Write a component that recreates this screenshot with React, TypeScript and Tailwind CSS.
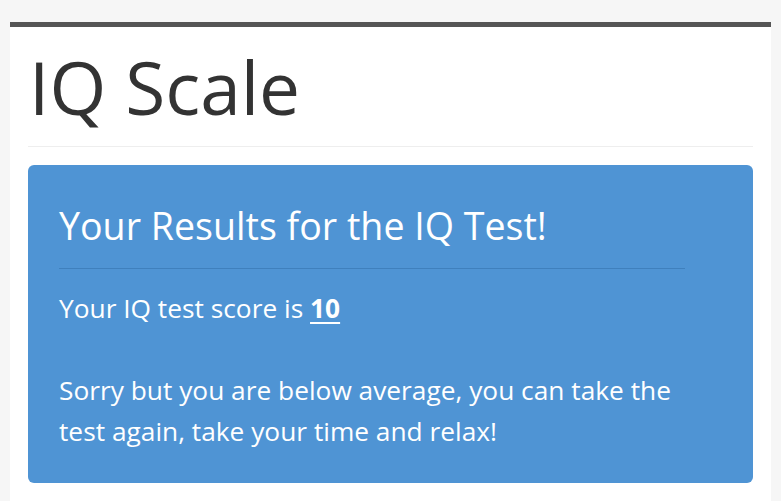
import React from 'react';

const App: React.FC = () => {
  return (
    <div className="min-h-screen bg-[#f6f6f6] pt-[22px] pl-[10px] pr-[10px] font-['Open_Sans',sans-serif]">
      <div className="bg-white border-t-[5px] border-[#555555] px-[18px] pt-[20px] pb-[40px] min-h-[480px]">
        {/* title */}
        <h1 className="text-[73px] leading-[1.1] text-[#333333] pl-[1px] font-normal">IQ Scale</h1>
        <hr className="mt-[19px] border-t border-[#eeeeee]" />

        {/* results panel */}
        <div className="mt-[18px] bg-[#4f94d4] rounded-[6px] pl-[31px] pt-[40px] pb-[31px] text-white">
          <div className="w-[626px]">
            <h2 className="text-[37.6px] leading-[1.1] font-normal">Your Results for the IQ Test!</h2>
            <hr className="mt-[21px] border-t border-[#3f80bd]" />
            <div className="text-[26.3px] leading-[41px] mt-[19px]">
              <p>
                Your IQ test score is <b className="underline underline-offset-[4px] font-bold">10</b>
              </p>
              <p className="mt-[41px]">
                Sorry but you are below average, you can take the test again, take your time and relax!
              </p>
            </div>
          </div>
        </div>
      </div>
    </div>
  );
};

export default App;
